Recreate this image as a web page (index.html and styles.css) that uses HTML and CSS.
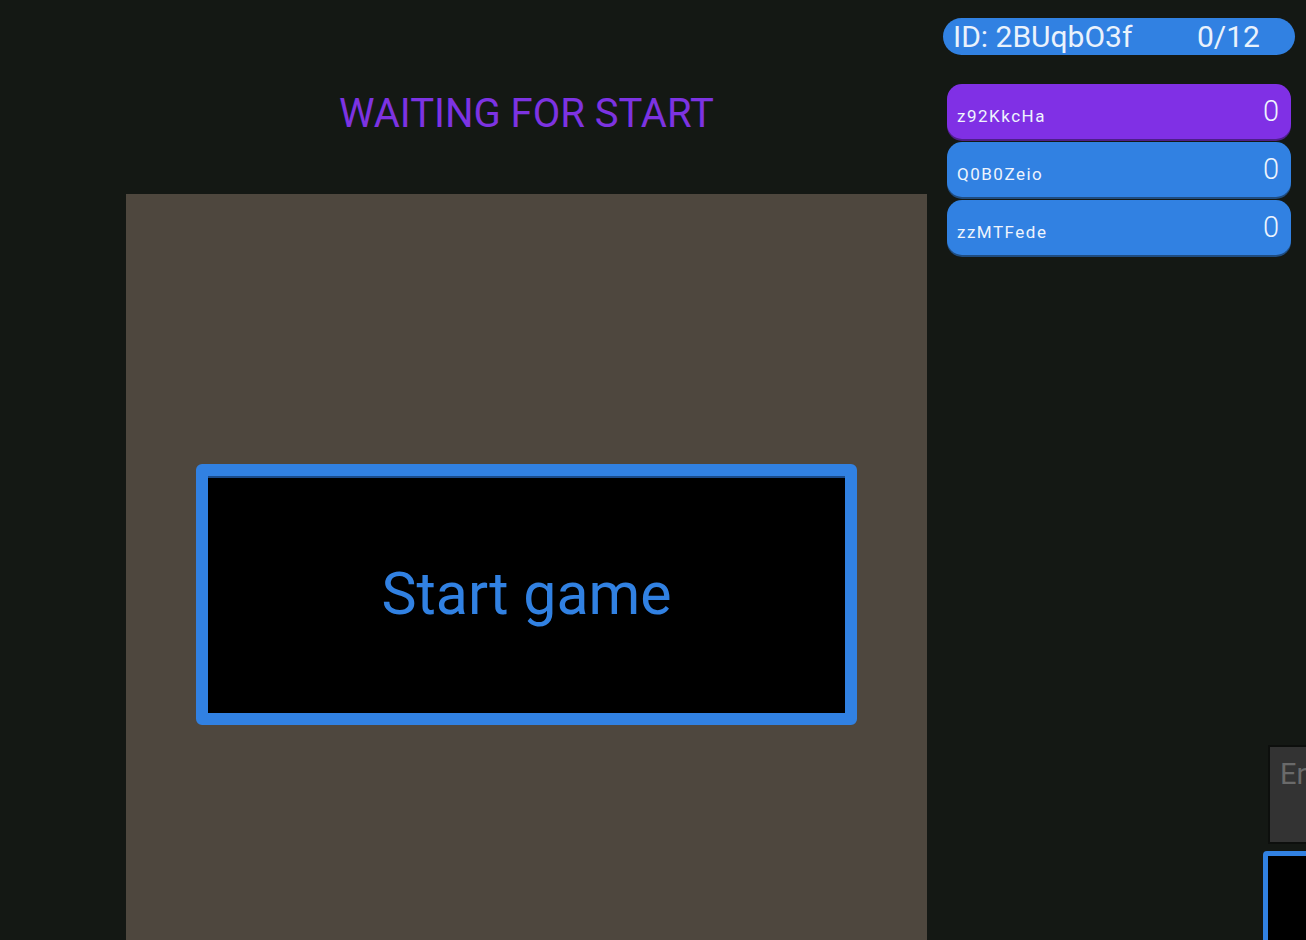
FILE: index.html
```html
<!DOCTYPE html>
<html>
<head>
<meta charset="utf-8">
<link rel="stylesheet" href="styles.css">
</head>
<body>
<div class="app">
  <main class="game">
    <h1 class="status">WAITING FOR START</h1>
    <div class="board">
      <button class="start">Start game</button>
    </div>
  </main>
  <aside class="side">
    <div class="room">
      <span class="room-id">ID: 2BUqbO3f</span>
      <span class="room-count">0/12</span>
    </div>
    <ul class="players">
      <li class="player me"><span class="name">z92KkcHa</span><span class="score">0</span></li>
      <li class="player"><span class="name">Q0B0Zeio</span><span class="score">0</span></li>
      <li class="player"><span class="name">zzMTFede</span><span class="score">0</span></li>
    </ul>
  </aside>
</div>
<div class="chat">
  <div class="chat-input">Enter message</div>
  <div class="chat-send"></div>
</div>
</body>
</html>
```
FILE: styles.css
```css
html, body {
  margin: 0;
  padding: 0;
  background: #141814;
  height: 100%;
  overflow: hidden;
  font-family: Roboto, "Liberation Sans", sans-serif;
}
.app {
  display: flex;
  align-items: flex-start;
}
.game {
  margin-left: 126px;
  width: 801px;
  display: flex;
  flex-direction: column;
  align-items: center;
}
.status {
  margin: 0;
  padding-top: 93px;
  height: 194px;
  box-sizing: border-box;
  font-size: 40px;
  line-height: 42px;
  font-weight: 400;
  color: #7d33e2;
}
.board {
  width: 801px;
  height: 760px;
  background: #4e473e;
  box-sizing: border-box;
  padding-top: 270px;
  display: flex;
  justify-content: center;
}
.start {
  width: 661px;
  height: 261px;
  background: #000;
  border: 12px solid #3181e2;
  border-radius: 6px;
  box-shadow: inset 0 2px 0 #1a4a88;
  color: #3181e2;
  font-family: Roboto, "Liberation Sans", sans-serif;
  font-size: 59px;
  padding: 0;
  padding-bottom: 2px;
}
.side {
  margin-left: 16px;
  width: 352px;
  padding-top: 18px;
}
.room {
  height: 37px;
  background: #3181e2;
  border-radius: 19px;
  display: flex;
  align-items: center;
  color: #eaf2fc;
  font-size: 30px;
  padding-left: 10px;
}
.room-id { width: 244px; }
.players {
  list-style: none;
  margin: 29px 0 0 4px;
  padding: 0;
  width: 344px;
  display: flex;
  flex-direction: column;
  gap: 3px;
}
.player {
  height: 55px;
  background: #3181e2;
  border-radius: 15px;
  box-shadow: 0 2px 0 #1f4c80;
  display: flex;
  align-items: center;
  justify-content: space-between;
  padding: 0 12px 0 10px;
  color: #eef4fd;
}
.player.me {
  background: #8030e5;
  box-shadow: 0 2px 0 #4e1f8a;
}
.name {
  font-size: 17px;
  letter-spacing: 1.5px;
  padding-top: 8px;
}
.score {
  font-size: 29px;
  font-weight: 300;
  padding-bottom: 2px;
}
.chat {
  position: absolute;
  left: 1263px;
  top: 745px;
  width: 400px;
}
.chat-input {
  margin-left: 5px;
  height: 99px;
  box-sizing: border-box;
  background: #333333;
  border: 2px solid #0d0f0d;
  color: #6a6a6a;
  font-size: 29px;
  padding: 10px 0 0 10px;
}
.chat-send {
  margin-top: 7px;
  height: 120px;
  background: #000;
  border: 5px solid #3181e2;
  border-radius: 4px;
}
```
